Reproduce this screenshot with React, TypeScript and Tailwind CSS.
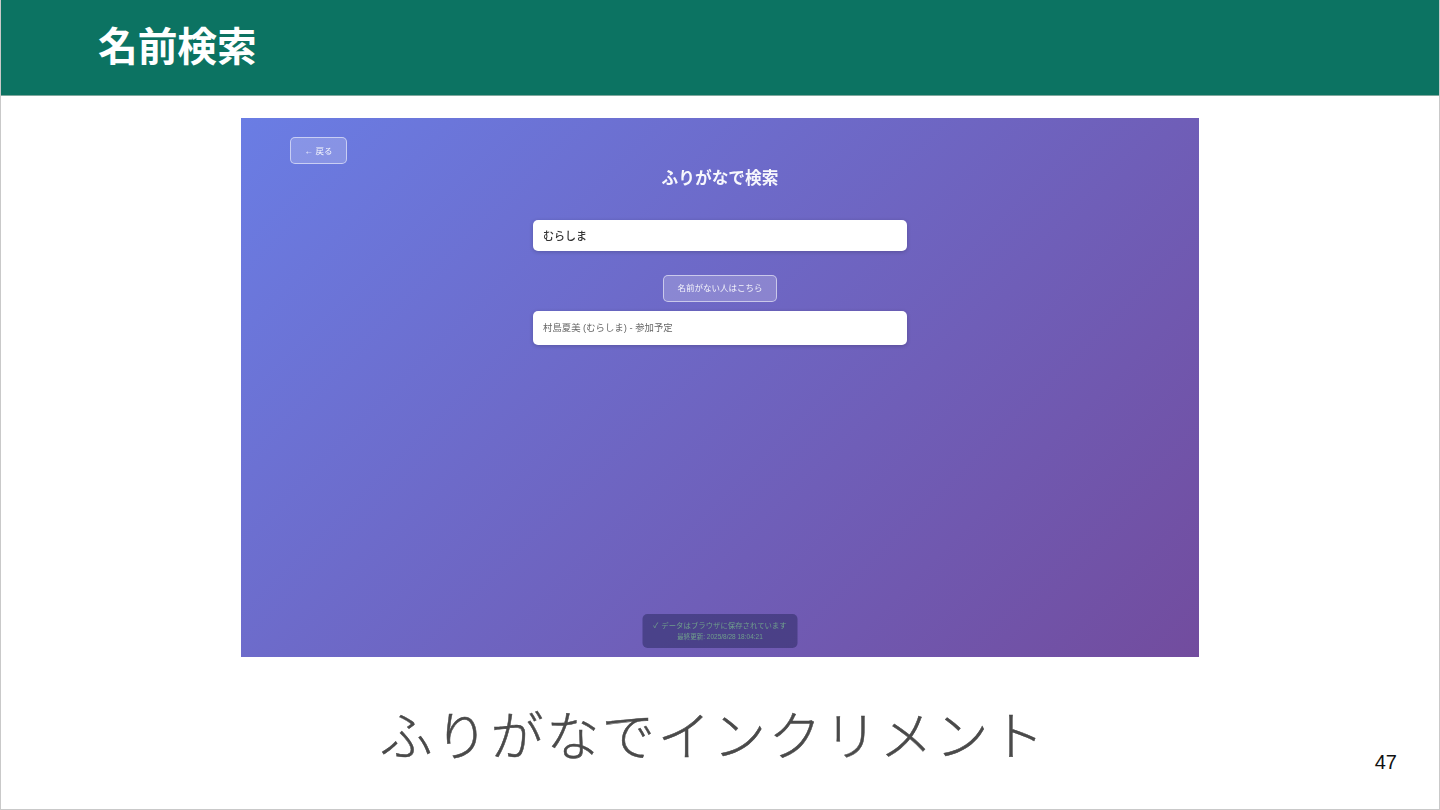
const cjk = "font-['Liberation_Sans','Noto_Sans_CJK_JP',sans-serif]"

function Panel() {
  return (
    <div className="relative mx-auto flex h-[539px] w-[958px] flex-col bg-[linear-gradient(135deg,#6a7de4_0%,#724c9e_100%)] px-[49px] pt-[19px]">
      <div className="flex h-[27px] w-[57px] items-center justify-center rounded-[5px] border-[1.5px] border-white/55 bg-white/20 pt-[1px] text-[8.5px] text-white/90 blur-[0.3px]">
        ← 戻る
      </div>
      <h2 className="mt-[3px] text-center text-[16.7px] leading-[24px] font-bold text-white/95 blur-[0.3px]">ふりがなで検索</h2>
      <div className="mx-auto mt-[29px] flex h-[31px] w-[374px] items-center rounded-[5px] bg-white px-[10px] pt-[1px] text-[11px] font-medium text-[#333] shadow-[0_1px_4px_rgba(0,0,0,0.2)] blur-[0.3px]">
        むらしま
      </div>
      <div className="mx-auto mt-[24px] flex h-[27px] w-[114px] items-center justify-center rounded-[5px] border-[1.5px] border-white/55 bg-white/20 text-[8.5px] text-white/90 blur-[0.3px]">
        名前がない人はこちら
      </div>
      <div className="mx-auto mt-[9px] flex h-[34px] w-[374px] items-center rounded-[5px] bg-white px-[10px] text-[9.4px] text-[#666] shadow-[0_1px_4px_rgba(0,0,0,0.2)] blur-[0.3px]">
        村島夏美 (むらしま) - 参加予定
      </div>
      <div className="absolute bottom-[9px] left-1/2 flex h-[34px] w-[155px] -translate-x-1/2 flex-col items-center justify-center rounded-[5px] bg-[#26265c]/50 text-[#6f9f8c] blur-[0.5px]">
        <span className="flex gap-[3px] text-[7.4px] leading-[12px] whitespace-nowrap"><span>✓</span><span>データはブラウザに保存されています</span></span>
        <span className="text-[6.5px] leading-[10px] whitespace-nowrap">最終更新: 2025/8/28 18:04:21</span>
      </div>
    </div>
  )
}

export default function App() {
  return (
    <div className={`flex h-[810px] w-[1440px] flex-col overflow-hidden border-x border-b border-[#c9c9c9] bg-white ${cjk}`}>
      <header className="-mx-px flex h-[96px] shrink-0 items-center border-b border-[#7fa89e] bg-[#0c7362] pl-[98px]">
        <h1 className="text-[39.7px] leading-none font-bold text-white">名前検索</h1>
      </header>
      <main className="flex flex-1 flex-col pt-[22px]">
        <Panel />
        <div className="relative flex-1">
          <p className="pt-[46px] pr-[14px] text-center text-[53px] leading-[70px] font-light tracking-[2.6px] text-[#4a4a4a] [-webkit-text-stroke:0.5px_#4a4a4a]">ふりがなでインクリメント</p>
          <span className="absolute top-[93px] right-[42px] text-[20px] leading-[24px] text-[#111]">47</span>
        </div>
      </main>
    </div>
  )
}
